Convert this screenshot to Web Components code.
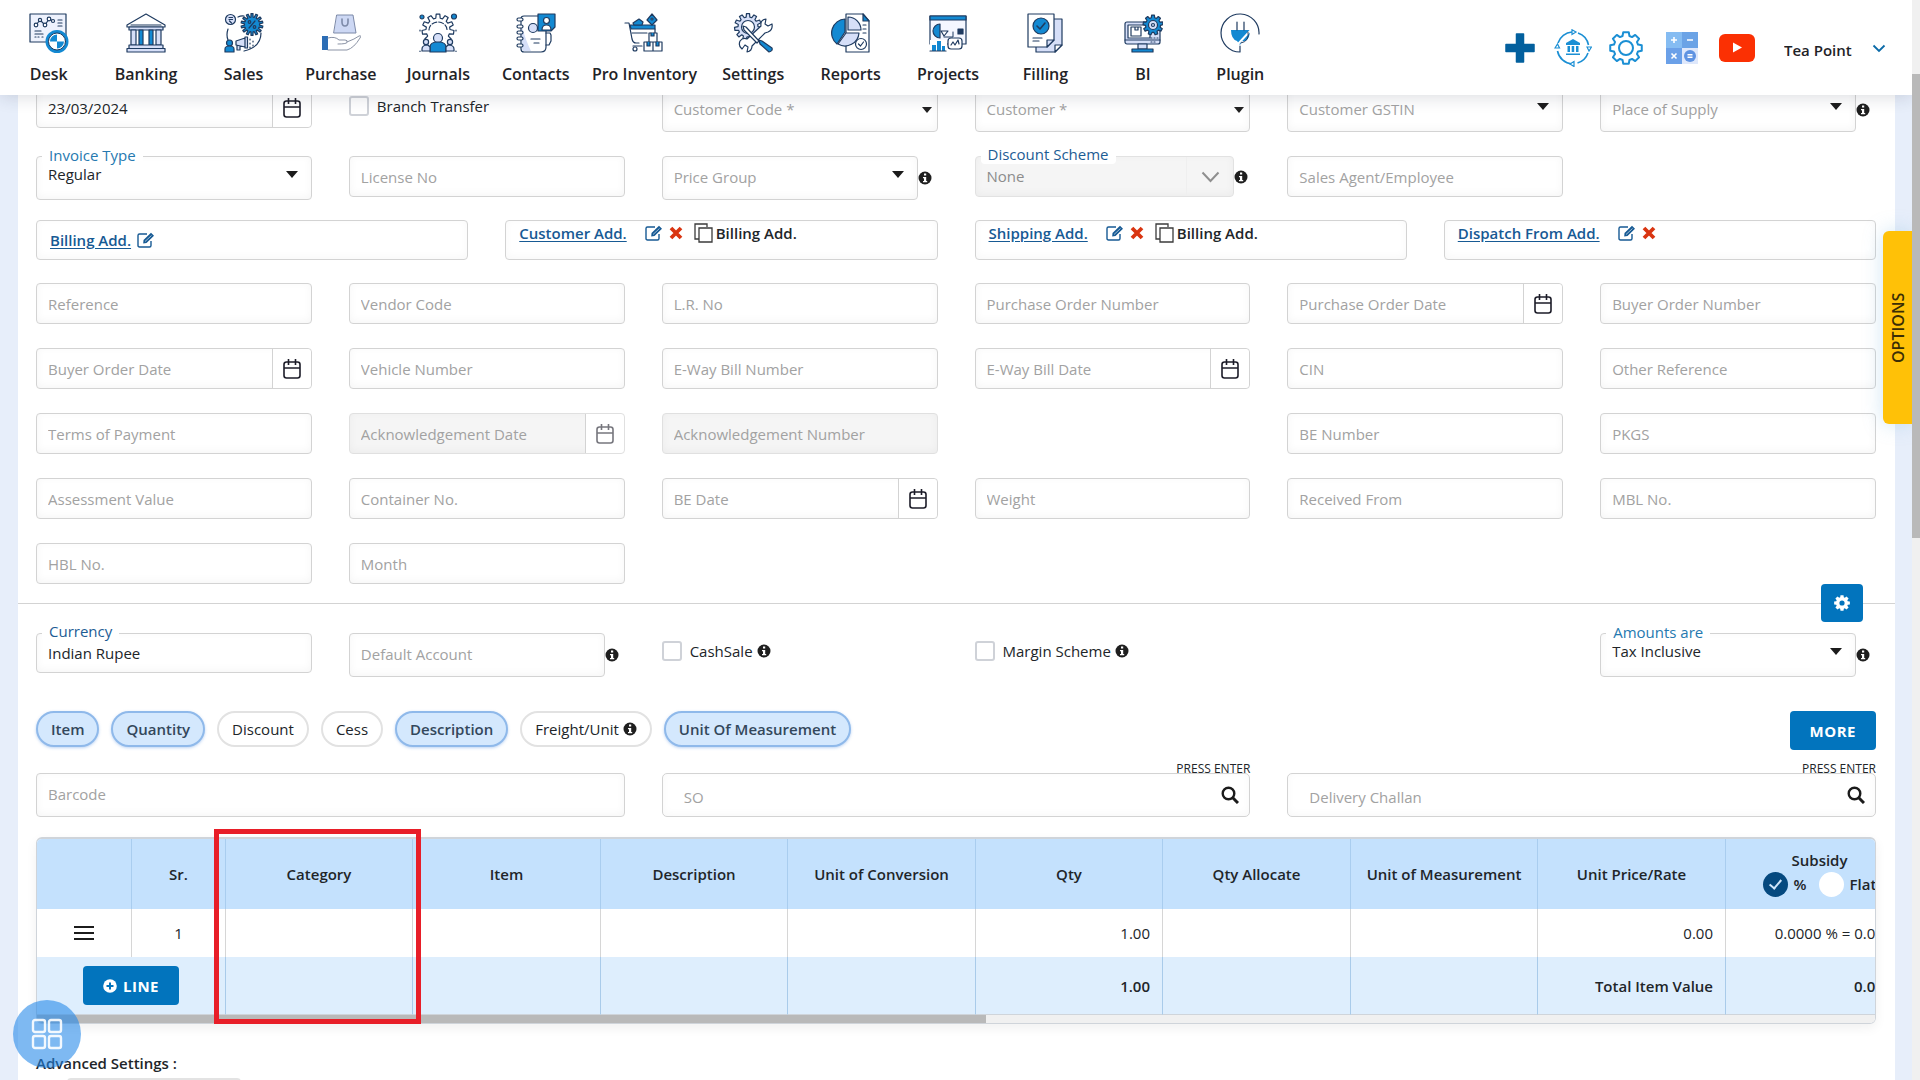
<!DOCTYPE html>
<html lang="en">
<head>
<meta charset="utf-8">
<title>Sales Invoice</title>
<style>
  html, body { margin: 0; height: 100%; overflow: hidden; }
  body { font-family: "Open Sans", "Noto Sans", sans-serif; font-size: 15px; line-height: 20px; color: #212529; background: #e7eefa; }
</style>
</head>
<body>
<invoice-app></invoice-app>
<script>
const N = '#1f3b60', B = '#1389d2', L = '#d6dff8';
const gearPath = (cx, cy, ro, ri, n, w = 0.5) => {
  let d = '';
  for (let i = 0; i < n; i++) {
    const a = i * 2 * Math.PI / n, s = Math.PI / n;
    [[-s * w * 1.3, ri], [-s * w * .8, ro], [s * w * .8, ro], [s * w * 1.3, ri]].forEach(([o, r], k) => {
      d += (i + k ? 'L' : 'M') + (cx + r * Math.sin(a + o)).toFixed(2) + ' ' + (cy - r * Math.cos(a + o)).toFixed(2);
    });
  }
  return d + 'Z';
};
const svg = (w, h, body, vb) => `<svg width="${w}" height="${h}" viewBox="${vb || `0 0 ${w} ${h}`}" fill="none" aria-hidden="true">${body}</svg>`;
const nav = b => svg(40, 40, `<g stroke="${N}" stroke-width="1.2" stroke-linejoin="round" stroke-linecap="round">${b}</g>`);

const ICONS = {
  desk: nav(`<path d="M1 1h36v28H1z" fill="#eef2fd"/><path d="M7 12l4-5 5 5 4-6 4 2"/><g fill="#fff"><circle cx="7" cy="12" r="1.8"/><circle cx="11" cy="7" r="1.6"/><circle cx="16" cy="12" r="1.8"/><circle cx="20" cy="6" r="1.8"/><circle cx="24" cy="8" r="1.5"/></g><path d="M29 7h4M29 10h4M29 13h4M6 18h6M6 21h8M6 24h1M9 24h1M13 24h1"/><circle cx="28" cy="28.500" r="10" fill="#fff" stroke="${B}" stroke-width="3"/><path d="M28 28.500v-7a7 7 0 0 0-7 7zM28 28.500v7a7 7 0 0 0 7-7z" fill="${B}" stroke="none"/><circle cx="28" cy="28.500" r="8.500" stroke-width="1"/>`),
  banking: nav(`<path d="M20 1L1 12v2h38v-2z" fill="#fff"/><path d="M5 12h30"/><path d="M3 14h34v3H3z" fill="${L}"/><path d="M5 17h5v15H5zM30 17h5v15h-5z" fill="${L}"/><path d="M13 17h4v15h-4zM23 17h4v15h-4z" fill="${B}"/><path d="M3 32h34v3.500H3zM1 35.500h38V39H1z" fill="${L}"/>`),
  sales: nav(`<circle cx="6.500" cy="6.500" r="5" fill="${L}"/><path d="M5 4.500h3.500M5 6.500h3.500M5.500 8l2 2"/><path d="M14 4q3-1.500 6-1M4 16q-2 6 0 11M37 20q0 14-17 18" /><path d="${gearPath(28, 11.500, 11, 7.500, 14)}" fill="${B}"/><path d="M25 15l6-7"/><circle cx="25.500" cy="9" r="1.300"/><circle cx="30.500" cy="14" r="1.300"/><circle cx="5.500" cy="30" r="3" fill="${B}"/><path d="M1 39v-3q0-3 4.500-3t4.500 3v3z" fill="${B}"/><path d="M12 28l9-3v9l-9-2zM21 24h2.500v11H21zM13 32v5h3v-4" fill="${L}"/><path d="M26 26v1M26 30v1M26 34v1M29 28v1M29 32v1"/>`),
  purchase: nav(`<g stroke="#7d8aa8" stroke-width="1"><path d="M16 2h16l3 18H13z" fill="#cdd8f4"/><path d="M21 6v3q0 4 3 4t3-4V6" stroke-width="1.600"/><path d="M1 23h6v14H1z" fill="#2c6db5" stroke="none"/><path d="M7 25q7-2 11 2h6q3 0 2 2.500-1 1.500-9 1.500M26 29q8-3 12-6 3-1 1 2-6 10-13 12H7" stroke="#8b93a5"/></g>`),
  journals: nav(`<path d="${gearPath(20, 17, 16, 12, 11)}"/><path d="M11 17a9 8 0 0 1 18 0" stroke-dasharray="5 2"/><g fill="${B}"><circle cx="4" cy="4" r="2"/><circle cx="36" cy="3.500" r="2.500"/></g><path d="M0 26h40v14H0z" fill="#fff" stroke="none"/><g fill="${B}"><circle cx="20" cy="25" r="4.500" fill="${L}"/><path d="M12 39v-5q0-5 8-5t8 5v5z"/></g><g fill="${L}"><circle cx="8" cy="29" r="2.600"/><path d="M4 38v-2q0-4 6-4l2 2v4z"/><circle cx="32" cy="29" r="2.600"/><path d="M36 38v-2q0-4-6-4l-2 2v4z"/></g><path d="M2 17v1M38 17v1M2 38v.5M38 38v.5"/>`),
  contacts: nav(`<path d="M8 3h18q4 0 4 4v27q0 5-5 5H8q-3 0-3-3V6q0-3 3-3z" fill="#fff"/><path d="M6 14q4 14 9 24H8q-2 0-2-3z" fill="${L}" stroke="none"/><g fill="#fff"><rect x="1" y="5" width="6" height="3" rx="1.500"/><rect x="1" y="12" width="6" height="3" rx="1.500"/><rect x="1" y="18" width="6" height="3" rx="1.500"/><rect x="1" y="24" width="6" height="3" rx="1.500"/><rect x="1" y="31" width="6" height="3" rx="1.500"/></g><circle cx="17" cy="15" r="4.500" fill="${L}"/><path d="M22 1h17v13l-4 4H22z" fill="${B}"/><circle cx="30.500" cy="7.500" r="3" fill="#fff"/><path d="M26 17q0-5 4.500-5t4.500 5z" fill="#fff"/><path d="M15 26h9M18 30h5M30 20h4l1 2v6l-2 4h-3"/>`),
  inventory: nav(`<path d="M1 10h4l3 16q1 4 4 4h3" /><path d="M6 12h25v4H7z" fill="${B}"/><path d="M31 16v6M8 20h15"/><circle cx="11" cy="36" r="2"/><path d="M28 1l5 6-5 5-5-5z" fill="${B}"/><path d="M15 6l4 3-1 3h-8l-1-2z" fill="${B}"/><circle cx="28" cy="6" r="1" fill="#fff"/><g fill="#fff"><path d="M20 29h9v9h-9zM29 29h9v9h-9zM25 20h8v9h-8z"/></g><path d="M23 29v4h3v-4M32 29v4h3v-4M27 20v3h3v-3" fill="${B}"/><path d="M9 33h9"/>`),
  settings: nav(`<path d="${gearPath(15, 14, 13.500, 10, 11)}" fill="${L}"/><circle cx="15" cy="14" r="6.500" fill="#fff"/><path d="M9 36q-4-3-2-8 3-4 7-2l14-13q-1-6 5-7l-1 5 3 2 4-2q1 6-4 8l-3 1-13 13q0 5-5 6l1-5-3-2z" fill="#fff"/><path d="M10 13l3 1 13 14-2 2L11 17z" fill="#fff"/><path d="M26 27l3 1 10 7q1 3-3 4L27 31z" fill="${B}"/>`),
  reports: nav(`<path d="M15 1h17l6 7v31H15z" fill="#fff"/><path d="M32 1v7h6z" fill="${B}"/><path d="M32 12h3M32 16h3M32 20h3"/><path d="M14 6A14 14 0 0 0 6 31l8-12z" fill="${B}"/><path d="M7 31a14 14 0 0 0 21-11H15z" fill="${L}"/><path d="M17 4a13 13 0 0 1 13 13H17z" fill="${L}"/><circle cx="30" cy="31" r="5.500" fill="#fff"/><path d="M27.500 31l2 2 3-4"/>`),
  projects: nav(`<path d="M2 3h36v28H2z" fill="#f4f7ff"/><path d="M2 3h36v4H2z" fill="${B}"/><path d="M12 11a7 7 0 1 0 0 14z" fill="${B}"/><path d="M13 18h7l-4 5z" fill="#fff"/><path d="M30 16h5v5h-5z" fill="${N}"/><path d="M16 24h9v-5" stroke-width="1"/><rect x="20" y="25" width="14" height="11" rx="3" fill="#fff"/><path d="M23 32l2-3 2 3 3-5 1 4"/><path d="M2 27h17v12H2z" fill="#fff" stroke="none"/><path d="M4 32h4v6H4zM9 28h4v10H9zM14 33h3v5h-3z" fill="${B}" stroke="none"/><path d="M2 38h16"/>`),
  filling: nav(`<path d="M11 6h26v26l-7 7H11z" fill="${L}"/><path d="M30 39v-7h7z" fill="#fff"/><path d="M3 1h26v26l-7 7H3z" fill="#fff"/><path d="M22 34v-7h7z" fill="${L}"/><circle cx="16" cy="13" r="8" fill="${B}"/><path d="M12 13l3 3 5-6" stroke-width="1.600"/><path d="M8 25h9M8 28h6"/>`),
  bi: nav(`<rect x="2" y="9" width="35" height="22" rx="2" fill="${L}"/><path d="M5 12h22v13H5z" fill="#fff"/><path d="M2 27h35"/><path d="M8 14h10v9H8zM12 14v3h3v-3"/><path d="M28 25h1M31 25h1M34 25h1M28 29h1M31 29h1" /><path d="${gearPath(30, 12, 10, 7.500, 9)}" fill="${B}"/><circle cx="30" cy="12" r="4.500" fill="${L}"/><circle cx="30" cy="12" r="1.500"/><path d="M15 31h9v5h-9z" fill="${L}"/><path d="M9 36h21v3H9z" fill="${B}"/>`),
  plugin: nav(`<path d="M39 21A19 19 0 1 0 20 39v-6"/><path d="M11 17h19v7q0 4-5 4h-9q-5 0-5-4z" fill="#fff" stroke="none"/><path d="M11 17h19q0 9-5 11h-3l-2 4-3-4q-6-2-6-11z" fill="${B}" stroke="none"/><path d="M30 18L18 31l-1 5" stroke="#fff" stroke-width="2"/><path d="M28 19q2 9-7 11" stroke-width="1"/><path d="M17 9v8M24 9v8"/>`),
  plus: svg(30, 30, `<path d="M11.500 1h7v10.500H29v7H18.500V29h-7V18.500H1v-7h10.500z" fill="#03609e" stroke="#03609e" stroke-width="1.500" stroke-linejoin="round"/>`),
  bankSync: svg(38, 38, `<g stroke="#1b8fd4" stroke-width="1.600"><path d="M4 14A16 16 0 0 1 18 3M24 4a16 16 0 0 1 10.500 12M34 24a16 16 0 0 1-10.500 10M18 35A16 16 0 0 1 3.500 22"/><path d="M18 .8L22 3l-4 2.500zM33 18l2 4 2.500-4zM20 32.500L16 35l4 2.500zM1 19l2.500-4 2 4z" fill="#fff" stroke-width="1.200"/></g><path d="M19 10l7 4v2H12v-2zM13.500 17H16v6h-2.500zM17.700 17h2.500v6h-2.500zM22 17h2.500v6H22zM12 24.500h14V26H12z" fill="#1b8fd4"/>`),
  gearLine: svg(34, 34, `<path d="${gearPath(17, 17, 16, 12.500, 8, .55)}" stroke="#1b8fd4" stroke-width="2" stroke-linejoin="round"/><circle cx="17" cy="17" r="7" stroke="#1b8fd4" stroke-width="2"/>`),
  calc: svg(32, 32, `<rect width="16" height="16" fill="#85bcf2"/><rect x="16" width="16" height="16" fill="#6ba3e6"/><rect y="16" width="16" height="16" fill="#6ba0e8"/><rect x="16" y="16" width="16" height="16" fill="#dfe8fb"/><circle cx="24" cy="24" r="6" fill="#5f93e2"/><path d="M8 5v6M5 8h6M21 8h6M5.500 21.500l5 5M10.500 21.500l-5 5M21.500 22.700h5M21.500 25.300h5" stroke="#fff" stroke-width="1.600"/>`),
  youtube: svg(38, 28, `<rect x="1" y="0" width="36" height="28" rx="6" fill="#fb3003"/><path d="M15 8.500l9 5-9 5z" fill="#fff"/>`),
  chevron: svg(14, 9, `<path d="M1.500 1.500L7 7l5.500-5.500" stroke="#0b6aa8" stroke-width="1.800"/>`),
  chevronGray: svg(19, 12, `<path d="M1.500 1.500l8 8.500 8-8.500" stroke="#8f8f8f" stroke-width="2"/>`),
  info: svg(14, 14, `<circle cx="7" cy="7" r="6.500" fill="#1f1f1f"/><path d="M6 2.500h2.200v2H6zM5 6h3.200v4h1v1.300H5V10h1V7.300H5z" fill="#fff"/>`),
  calendar: svg(18, 22, `<g stroke="#1c1c28" stroke-width="1.600"><rect x="1" y="4" width="16" height="16" rx="2.500"/><path d="M1 10h16M5.500 1v6M12.500 1v6"/></g>`),
  caret: svg(12, 7, `<path d="M0 0h12L6 7z" fill="#1c1c1c"/>`),
  caretSmall: svg(10, 6, `<path d="M0 0h10L5 6z" fill="#222"/>`),
  edit: svg(18, 16, `<path d="M14 9v4.500q0 1.500-1.500 1.500h-10Q1 15 1 13.500v-10Q1 2 2.500 2H10" stroke="#175a94" stroke-width="1.400"/><path d="M6.500 8L14 .8l3 2.900L9.500 11l-3.300.5z" fill="#175a94"/><path d="M8 9.500l6.500-6" stroke="#fff" stroke-width=".6"/>`),
  cross: svg(14, 14, `<path d="M2 2l10 10M12 2L2 12" stroke="#d93511" stroke-width="3.800"/>`),
  copy: svg(19, 20, `<path d="M5 16H1V1h12v3M5 5h13v14H5z" stroke="#3b3b3b" stroke-width="1.300"/>`),
  cog: svg(18, 18, `<path fill-rule="evenodd" d="${gearPath(9, 9, 8, 6, 8, .6)}M11.600 9a2.600 2.600 0 1 0-5.200 0a2.600 2.600 0 0 0 5.200 0z" fill="#fff"/>`),
  search: svg(18, 18, `<circle cx="7.500" cy="7.500" r="5.800" stroke="#1b1b1b" stroke-width="2.400"/><path d="M11.500 11.500L17 17" stroke="#1b1b1b" stroke-width="3"/>`),
  menu: svg(20, 14, `<path d="M0 1h20M0 7h20M0 13h20" stroke="#1c1c1c" stroke-width="1.800"/>`),
  plusCircle: svg(14, 14, `<circle cx="7" cy="7" r="6.800" fill="#fff"/><path d="M7 3.500v7M3.500 7h7" stroke="#0274bd" stroke-width="2"/>`),
  grid: svg(32, 32, `<g stroke="#fff" stroke-width="2.400" stroke-opacity=".9"><rect x="2" y="2" width="12" height="12" rx="2"/><rect x="18" y="2" width="12" height="12" rx="2"/><rect x="2" y="18" width="12" height="12" rx="2"/><rect x="18" y="18" width="12" height="12" rx="2"/></g>`)
};

const BASE = `*{box-sizing:border-box} svg{display:block;flex:none} button,input,select{font:inherit;color:inherit;margin:0} button{border:0;background:none;padding:0;cursor:pointer}`;
class Base extends HTMLElement {
  connectedCallback() {
    if (this.shadowRoot) return;
    this.attachShadow({ mode: 'open' }).innerHTML = `<style>${BASE}${this.css()}</style>${this.html()}`;
  }
  a(n) { return this.getAttribute(n) || ''; }
  css() { return ':host{display:block}'; }
  html() { return '<slot></slot>'; }
}
const define = (name, css, html) => customElements.define(name, class extends Base {
  css() { return css; }
  html() { return typeof html === 'function' ? html(this) : html; }
});

define('info-mark', ':host{display:inline-flex;flex:none}', ICONS.info);

define('nav-item', `:host{display:block;min-width:0}
  a{display:flex;flex-direction:column;align-items:center;gap:10px;padding-top:13px;text-decoration:none;color:#1f2327;font-size:16px;line-height:22px;font-weight:600;white-space:nowrap}`,
  e => `<a href="#${e.a('icon')}">${ICONS[e.a('icon')]}<slot></slot></a>`);

define('top-bar', `:host{position:absolute;inset:0 0 auto 0;z-index:5;display:flex;justify-content:space-between;height:95px;background:#fff;box-shadow:0 2px 16px rgba(30,40,60,.16)}
  nav{display:grid;grid-template-columns:repeat(6,1fr) 120px repeat(6,1fr);flex:0 1 1289px}
  .tools{display:flex;align-items:center;height:96px;padding-right:26px}
  .tools button{display:flex}
  .tools .plus{margin-right:19px}.sync{margin-right:17px}.gear{margin-right:23px}.calc{margin-right:20px}.tube{margin-right:28px}
  .user{gap:17px;align-items:center;font-weight:600;color:#1f2327}
  .user span{width:71px;overflow:hidden;white-space:nowrap;text-align:left;padding-top:3px}`,
  `<nav>${[['desk', 'Desk'], ['banking', 'Banking'], ['sales', 'Sales'], ['purchase', 'Purchase'], ['journals', 'Journals'], ['contacts', 'Contacts'], ['inventory', 'Pro Inventory'], ['settings', 'Settings'], ['reports', 'Reports'], ['projects', 'Projects'], ['filling', 'Filling'], ['bi', 'BI'], ['plugin', 'Plugin']].map(([i, t]) => `<nav-item icon="${i}">${t}</nav-item>`).join('')}</nav>
  <div class="tools"><button class="plus" aria-label="Add">${ICONS.plus}</button><button class="sync" aria-label="Bank sync">${ICONS.bankSync}</button><button class="gear" aria-label="Settings">${ICONS.gearLine}</button><button class="calc" aria-label="Calculator">${ICONS.calc}</button><button class="tube" aria-label="Videos">${ICONS.youtube}</button><button class="user"><span>Tea Point</span>${ICONS.chevron}</button></div>`);

const FIELD = `:host{display:flex;align-items:center;position:relative;min-width:0;height:var(--h,41px)}
  :host([tall]){--h:44px} :host([short]){--h:40px}
  .box{display:flex;align-items:stretch;flex:1;min-width:0;height:100%;position:relative;border:1px solid #d3d3d3;border-radius:4px;background:#fff;box-shadow:inset 0 -2px 8px rgba(0,0,0,.04)}
  input,select{flex:1;min-width:0;width:100%;border:0;outline:0;background:none;appearance:none;padding:0 11px;border-radius:4px;color:#212529;font-size:15px}
  input::placeholder{color:#a2a2a2;opacity:1}
  select.empty{color:#a2a2a2}
  select:disabled{color:#8c8c8c;opacity:1}
  .float{position:absolute;left:5px;top:-12px;padding:0 7px;line-height:20px;background:#fff;border-radius:4px;color:#2679b0}
  select{padding-bottom:2px}
  :host([label]) select{padding-bottom:8px}
  .tail{display:flex;width:var(--tail,20px)}
  .end{display:flex;align-items:center}
  .caret{padding:0 13px 8px 0}`;

define('text-field', FIELD + `
  .float{top:-13px;color:#1d5c94}
  :host([tall]) input{padding-bottom:2px}
  :host([disabled]) .box{background:#f5f5f5;border-color:#e0e0e0}`,
  e => `<div class="box">${e.a('label') ? `<label class="float" for="f">${e.a('label')}</label>` : ''}<input id="f" type="text" placeholder="${e.a('hint')}" value="${e.a('value')}" ${e.a('label') ? '' : `aria-label="${e.a('hint')}"`} ${e.hasAttribute('disabled') ? 'disabled' : ''}></div>${e.hasAttribute('info') ? '<span class="tail"><info-mark></info-mark></span>' : ''}`);

define('date-field', FIELD + `
  button{width:39px;display:flex;align-items:center;justify-content:center;border-left:1px solid #d3d3d3;background:#fff;border-radius:0 4px 4px 0}
  :host([disabled]) .box{background:#f5f5f5;border-color:#e0e0e0} :host([disabled]) svg{opacity:.6}`,
  e => `<div class="box"><input type="text" placeholder="${e.a('hint')}" value="${e.a('value')}" aria-label="${e.a('hint') || 'Date'}" ${e.hasAttribute('disabled') ? 'disabled' : ''}><button aria-label="Open calendar" ${e.hasAttribute('disabled') ? 'disabled' : ''}>${ICONS.calendar}</button></div>`);

define('select-field', FIELD + `
  :host([small]) .caret{padding:0 5px 0 0}
  :host([disabled]) .box{background:#f5f5f5;border-color:#e2e2e2}
  :host([disabled]) .float{top:-13px;color:#1d5c94} :host([disabled]) select{padding:0 11px 2px}
  :host([disabled]) .caret{padding:0 13px 0 14px;border-left:1px solid #efefef}`,
  e => `<div class="box">${e.a('label') ? `<label class="float" for="f">${e.a('label')}</label>` : ''}<select id="f" class="${e.a('value') ? '' : 'empty'}" ${e.a('label') ? '' : `aria-label="${e.a('hint')}"`} ${e.hasAttribute('disabled') ? 'disabled' : ''}><option>${e.a('value') || e.a('hint')}</option></select><span class="end caret">${e.hasAttribute('disabled') ? ICONS.chevronGray : e.hasAttribute('small') ? ICONS.caretSmall : ICONS.caret}</span></div>${e.hasAttribute('info') ? '<span class="tail"><info-mark></info-mark></span>' : ''}`);

define('check-field', `:host{display:flex;padding-top:8px}
  label{display:flex;align-items:center;gap:8px;white-space:nowrap}
  label slot{display:block}
  input{appearance:none;width:20px;height:20px;border:2px solid #cfd2d8;border-radius:3px;background:#fff}
  info-mark{margin-left:-4px}`,
  e => `<label><input type="checkbox"><slot></slot>${e.hasAttribute('info') ? '<info-mark></info-mark>' : ''}</label>`);

define('address-box', `:host{display:flex;align-items:flex-start;height:40px;border:1px solid #d3d3d3;border-radius:4px;padding:2px 13px;font-weight:600;white-space:nowrap;box-sizing:border-box;box-shadow:inset 0 -2px 8px rgba(0,0,0,.03)}
  :host([plain]){align-items:center}
  a{color:#175a94;text-underline-offset:2px;line-height:20px}
  .tools{display:flex;align-items:center;height:20px;margin-left:18px;gap:6px}
  :host([plain]) .tools{margin-left:6px}
  button{display:flex;align-items:center}
  .copy{gap:3px;margin-left:5px}`,
  e => `<a href="#address"><slot></slot></a><span class="tools"><button aria-label="Edit">${ICONS.edit}</button>${e.hasAttribute('plain') ? '' : `<button aria-label="Remove">${ICONS.cross}</button>`}${e.hasAttribute('copy') ? `<button class="copy">${ICONS.copy}Billing Add.</button>` : ''}</span>`);

define('pill-toggle', `:host{display:block}
  button{display:flex;align-items:center;gap:4px;height:36px;padding:0 13px;border:2px solid #e2e2e2;border-radius:18px;background:#fff;white-space:nowrap}
  :host([on]) button{background:#d4e8fd;border-color:#8fb9ea;font-weight:600;color:#33475b;box-shadow:0 1px 3px rgba(60,130,220,.35)}`,
  e => `<button aria-pressed="${e.hasAttribute('on')}"><slot></slot>${e.hasAttribute('info') ? '<info-mark></info-mark>' : ''}</button>`);

define('solid-button', `:host{display:block}
  button{display:flex;align-items:center;justify-content:center;gap:6px;height:39px;padding:0 20px;border-radius:4px;background:#0274bd;color:#fff;font-weight:700;letter-spacing:.5px}
  :host([square]) button{width:42px;height:38px;padding:0}`,
  e => `<button aria-label="${e.a('label')}">${e.a('icon') ? ICONS[e.a('icon')] : ''}<slot></slot></button>`);

define('search-field', `:host{display:block;position:relative}
  .hint{position:absolute;right:0;bottom:100%;font-size:12px;line-height:12px;margin-bottom:-2px}
  .box{display:flex;align-items:center;height:44px;border:1px solid #d3d3d3;border-radius:5px;padding-right:10px;background:#fff;box-shadow:inset 0 -2px 8px rgba(0,0,0,.03)}
  input{flex:1;min-width:0;border:0;outline:0;background:none;padding:4px 21px 0}
  input::placeholder{color:#a2a2a2;opacity:1}
  button{display:flex}`,
  e => `<span class="hint">PRESS ENTER</span><div class="box"><input type="text" placeholder="${e.a('hint')}" aria-label="${e.a('hint')}"><button aria-label="Search">${ICONS.search}</button></div>`);

const COLS = [95, 94, 187, 188, 187, 188, 187, 188, 187, 188, 188];
define('items-table', `:host{display:block;position:relative}
  .frame{border:1px solid #cfd4da;border-top-width:2px;border-radius:6px;overflow:hidden;box-shadow:0 4px 12px rgba(0,0,0,.06)}
  .view{overflow:hidden}
  table{border-collapse:separate;border-spacing:0;table-layout:fixed;width:${COLS.reduce((a, b) => a + b)}px}
  th,td{padding:0 12px;border-right:1px solid #d6d6d6;white-space:nowrap;text-align:right;font-weight:400}
  thead th{height:70px;background:#c4e1fd;border-color:#a9cdef;text-align:center;font-weight:600}
  tbody td{height:48px} tfoot td{height:58px;background:#deeefd;border-color:#a9cbea;font-weight:600;border-bottom:1px solid #cfd4da}
  td.mid{text-align:center} td svg{margin:0 auto}
  td solid-button{display:inline-block}
  .radios{display:flex;justify-content:center;gap:12px;padding:2px 0}
  .radios label{display:flex;align-items:center;gap:6px}
  .radios input{appearance:none;width:25px;height:25px;border-radius:50%;background:#fff;display:grid;place-items:center}
  .radios input:checked{background:#05497f}
  .radios input:checked::after{content:"";width:5px;height:10px;border:solid #cfe5fa;border-width:0 2px 2px 0;transform:rotate(40deg);margin-bottom:3px}
  .track{display:flex;height:8px;background:#f0f0f0}.track::after{content:"";flex:15}.thumb{flex:16;background:#b9b9b9}
  .marker{position:absolute;left:178px;top:-8px;width:207px;height:195px;border:5px solid #e81e28;pointer-events:none}`,
  `<div class="frame"><div class="view"><table><colgroup>${COLS.map(w => `<col style="width:${w}px">`).join('')}</colgroup>
  <thead><tr><th></th><th>Sr.</th><th>Category</th><th>Item</th><th>Description</th><th>Unit of Conversion</th><th>Qty</th><th>Qty Allocate</th><th>Unit of Measurement</th><th>Unit Price/Rate</th><th>Subsidy<div class="radios"><label><input type="radio" name="s" checked>%</label><label><input type="radio" name="s">Flat</label></div></th></tr></thead>
  <tbody><tr><td>${ICONS.menu}</td><td class="mid">1</td><td></td><td></td><td></td><td></td><td>1.00</td><td></td><td></td><td>0.00</td><td>0.0000 % = 0.0000</td></tr></tbody>
  <tfoot><tr><td colspan="2" class="mid"><solid-button icon="plusCircle" label="Add line">LINE</solid-button></td><td></td><td></td><td></td><td></td><td>1.00</td><td></td><td></td><td>Total Item Value</td><td>0.0000</td></tr></tfoot></table></div>
  <div class="track"><div class="thumb"></div></div></div><div class="marker"></div>`);

define('options-tab', `:host{position:absolute;right:0;top:231px;z-index:4}
  button{width:29px;height:193px;background:#ffc107;border-radius:0 6px 6px 0;color:#3a2d05;font-size:16px;font-weight:600;writing-mode:vertical-rl;transform:rotate(180deg);box-shadow:0 0 20px rgba(120,180,220,.35);text-align:center}`,
  `<button>OPTIONS</button>`);

define('quick-menu', `:host{position:absolute;left:13px;bottom:12px;z-index:4}
  button{display:grid;place-items:center;width:68px;height:68px;border-radius:50%;background:rgba(33,135,232,.58)}`,
  `<button aria-label="Quick menu">${ICONS.grid}</button>`);

define('page-scroll', `:host{display:block;background:#f0f0f0;padding-top:74px}
  div{height:464px;background:#b9b9b9}`, '<div></div>');

const t = (h, x = '') => `<text-field hint="${h}" ${x}></text-field>`;
const d = (h, x = '') => `<date-field hint="${h}" ${x}></date-field>`;
define('invoice-form', `:host{display:flex;flex-direction:column;background:#fff;padding:88px 19px 40px 18px}
  .six{display:grid;grid-template-columns:repeat(6,minmax(0,1fr));gap:24px 37px;align-items:start}
  .four{display:grid;grid-template-columns:repeat(4,minmax(0,1fr));gap:37px;margin:20px 0 23px}
  .c5{grid-column:5}.c6{grid-column:6}
  .rule{display:flex;justify-content:flex-end;align-items:center;height:38px;margin:0 -19px 11px -18px;padding-right:32px;background:linear-gradient(#d3d3d3,#d3d3d3) 0 50%/100% 1px no-repeat}
  .bar{display:flex;justify-content:space-between;align-items:flex-start;margin:34px 0 23px}
  .pills{display:flex;gap:12px}
  .three{display:grid;grid-template-columns:repeat(3,minmax(0,1fr));gap:37px;margin-bottom:20px}
  h2{margin:29px 0 5px;font:inherit;font-weight:600;line-height:20px}
  .panel{width:174px;height:40px;margin-left:31px;border:2px solid #e3e3e3;border-radius:4px}`,
  `<div class="six">
    <date-field value="23/03/2024" short></date-field><check-field>Branch Transfer</check-field>
    <select-field hint="Customer Code *" tall small></select-field><select-field hint="Customer *" tall small></select-field>
    <select-field hint="Customer GSTIN" tall></select-field><select-field hint="Place of Supply" tall info></select-field>
    <select-field label="Invoice Type" value="Regular" tall></select-field>${t('License No')}
    <select-field hint="Price Group" tall info></select-field><select-field label="Discount Scheme" value="None" disabled info style="--tail:16px"></select-field>${t('Sales Agent/Employee')}
  </div>
  <div class="four"><address-box plain>Billing Add.</address-box><address-box copy>Customer Add.</address-box><address-box copy>Shipping Add.</address-box><address-box>Dispatch From Add.</address-box></div>
  <div class="six">
    ${t('Reference')}${t('Vendor Code')}${t('L.R. No')}${t('Purchase Order Number')}${d('Purchase Order Date')}${t('Buyer Order Number')}
    ${d('Buyer Order Date')}${t('Vehicle Number')}${t('E-Way Bill Number')}${d('E-Way Bill Date')}${t('CIN')}${t('Other Reference')}
    ${t('Terms of Payment')}${d('Acknowledgement Date', 'disabled')}${t('Acknowledgement Number', 'disabled')}${t('BE Number', 'class="c5"')}${t('PKGS')}
    ${t('Assessment Value')}${t('Container No.')}${d('BE Date')}${t('Weight')}${t('Received From')}${t('MBL No.')}
    ${t('HBL No.')}${t('Month')}
  </div>
  <div class="rule"><solid-button square icon="cog" label="Field settings"></solid-button></div>
  <div class="six">
    <text-field label="Currency" value="Indian Rupee" short></text-field>${t('Default Account', 'tall info')}
    <check-field info>CashSale</check-field><check-field info>Margin Scheme</check-field>
    <select-field class="c6" label="Amounts are" value="Tax Inclusive" tall info></select-field>
  </div>
  <div class="bar"><div class="pills"><pill-toggle on>Item</pill-toggle><pill-toggle on>Quantity</pill-toggle><pill-toggle>Discount</pill-toggle><pill-toggle>Cess</pill-toggle><pill-toggle on>Description</pill-toggle><pill-toggle info>Freight/Unit</pill-toggle><pill-toggle on>Unit Of Measurement</pill-toggle></div><solid-button label="More">MORE</solid-button></div>
  <div class="three">${t('Barcode', 'tall')}<search-field hint="SO"></search-field><search-field hint="Delivery Challan"></search-field></div>
  <items-table></items-table>
  <h2>Advanced Settings :</h2><div class="panel"></div>`);

define('invoice-app', `:host{display:grid;grid-template-columns:minmax(0,1fr) 8px;height:100vh;overflow:hidden}
  main{position:relative;overflow:hidden;padding:0 17px 0 18px}`,
  `<main><top-bar></top-bar><invoice-form></invoice-form><options-tab></options-tab><quick-menu></quick-menu></main><page-scroll></page-scroll>`);
</script>
</body>
</html>
